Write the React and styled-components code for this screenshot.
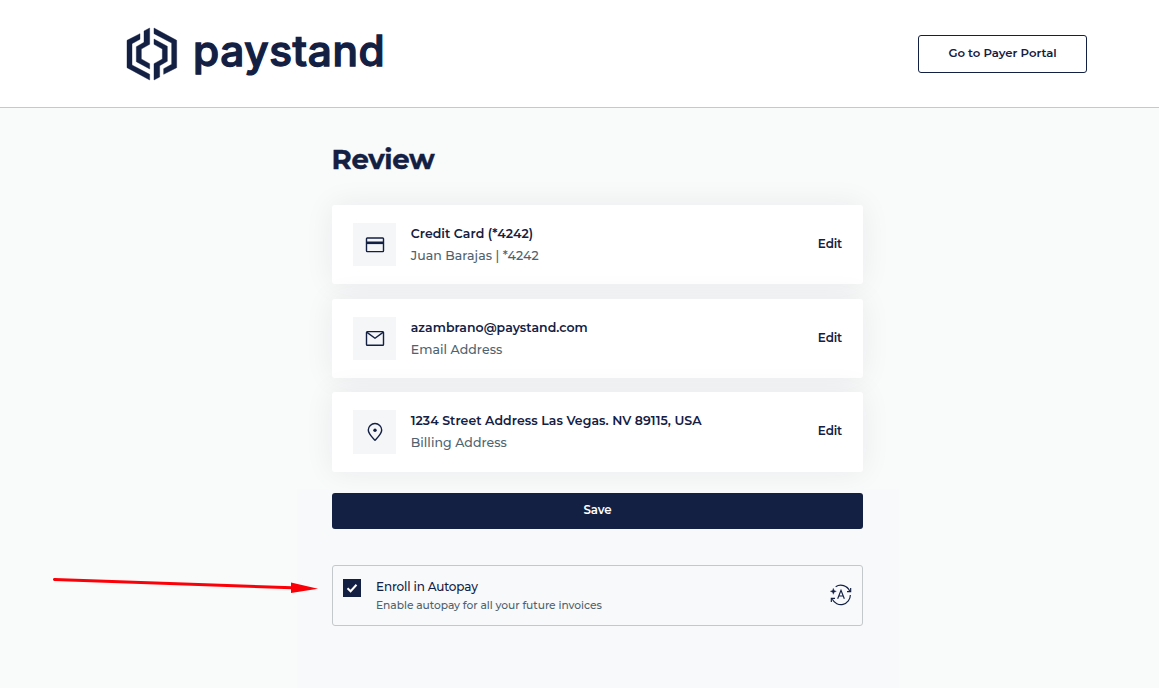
import React from "react";
import styled, { createGlobalStyle } from "styled-components";

const navy = "#132043";
const slate = "#4f626e";
const sans = 'Montserrat, Inter, "Liberation Sans", sans-serif';

const GlobalStyle = createGlobalStyle`
  * { box-sizing: border-box; }
  body {
    margin: 0;
    background: #f9fbfa;
    color: ${navy};
    font-family: ${sans};
  }
`;

const Page = styled.div`
  position: relative;
  display: flex;
  flex-direction: column;
  min-height: 688px;
  overflow: hidden;
`;

const Header = styled.header`
  display: flex;
  align-items: center;
  justify-content: space-between;
  height: 108px;
  padding: 0 72px 0 126px;
  background: #fff;
  border-bottom: 1px solid #c6c9ca;
`;

const PortalButton = styled.button`
  width: 169px;
  height: 38px;
  padding: 0 0 2px;
  border: 1px solid ${navy};
  border-radius: 3px;
  background: #fff;
  color: ${navy};
  font: 600 11.7px ${sans};
  letter-spacing: -0.03px;
`;

const Main = styled.main`
  display: flex;
  flex: 1;
  flex-direction: column;
  width: 602px;
  margin-left: 297px;
`;

const ReviewSection = styled.section`
  display: flex;
  flex-direction: column;
  height: 381px;
  padding: 33px 36px 0 35px;
`;

const Heading = styled.h1`
  height: 36px;
  margin: 0 0 28px -0.5px;
  font-size: 27.5px;
  font-weight: 700;
  line-height: 36px;
  letter-spacing: -0.3px;
  -webkit-text-stroke: 0.4px ${navy};
`;

const CardList = styled.div`
  display: flex;
  flex-direction: column;
  gap: 14.2px;
`;

const Card = styled.article`
  display: flex;
  align-items: center;
  height: 79.4px;
  padding: 0 21px;
  border-radius: 3px;
  background: #fff;
  box-shadow: 0 0 30px rgba(20, 31, 67, 0.07);
`;

const IconTile = styled.div`
  display: flex;
  align-items: center;
  justify-content: center;
  width: 43px;
  height: 43.4px;
  margin-right: 14.7px;
  background: #f4f6f8;
`;

const CardText = styled.div`
  flex: 1;
  padding-top: 0.6px;
  white-space: nowrap;
`;

const CardTitle = styled.div`
  font-size: 12.5px;
  font-weight: 600;
  line-height: 22px;
  letter-spacing: 0.05px;
`;

const CardCaption = styled.div`
  color: ${slate};
  font-size: 12.5px;
  font-weight: 500;
  line-height: 21.6px;
  letter-spacing: 0.07px;
`;

const EditButton = styled.button`
  padding: 0 0 2px;
  border: 0;
  background: none;
  color: ${navy};
  font: 600 12px ${sans};
  letter-spacing: -0.15px;
`;

const ActionSection = styled.section`
  display: flex;
  flex: 1;
  flex-direction: column;
  padding: 4px 36px 0 35px;
  background: #f8f9fb;
`;

const SaveButton = styled.button`
  height: 36px;
  margin-bottom: 36px;
  padding: 0 0 3px;
  border: 0;
  border-radius: 3px;
  background: ${navy};
  color: #fff;
  font: 600 11.8px ${sans};
  letter-spacing: -0.15px;
`;

const Autopay = styled.div`
  display: flex;
  align-items: flex-start;
  height: 61px;
  padding: 13px 10px 0;
  border: 1px solid #c5c8cb;
  border-radius: 3px;
`;

const CheckBox = styled.span`
  display: flex;
  align-items: center;
  justify-content: center;
  width: 18px;
  height: 18px;
  margin-right: 15px;
  background: ${navy};
`;

const AutopayText = styled.div`
  flex: 1;
  margin-top: -1px;
  white-space: nowrap;
`;

const AutopayTitle = styled.div`
  font-size: 12px;
  font-weight: 500;
  line-height: 18px;
  letter-spacing: -0.15px;
`;

const AutopayCaption = styled.div`
  margin-top: 1px;
  color: ${slate};
  font-size: 10.7px;
  font-weight: 500;
  line-height: 18px;
  letter-spacing: -0.04px;
`;

const AutopayIconSlot = styled.div`
  height: 22px;
  margin-top: 5px;
`;

const Pointer = styled.svg`
  position: absolute;
  top: 570px;
  left: 50px;
`;

function LogoHalf(props) {
  return (
    <g {...props}>
      <path d="M90 56 51 76V158L119 195V178L66 150V86L90 73Z" />
      <path d="M119 39 102 48V82L79 95V140L119 162V146L94 132V102L119 88Z" />
    </g>
  );
}

function Logo() {
  return (
    <svg width="260" height="60" viewBox="48 27 780 180" fill={navy} aria-label="paystand">
      <g stroke={navy} strokeWidth="1.2">
        <LogoHalf />
        <LogoHalf transform="rotate(180 125.5 117)" />
      </g>
      <text x="249" y="152" fontSize="127" fontWeight="500" fontFamily="Inter, sans-serif" textLength="575" stroke={navy} strokeWidth="4">
        paystand
      </text>
    </svg>
  );
}

function CardIcon() {
  return (
    <svg width="20" height="20" viewBox="0 0 20 20" fill="none" stroke={navy} strokeWidth="1.4">
      <rect x="1.5" y="3" width="17" height="13.6" rx="0.8" />
      <path d="M1.5 7.8H18.5" strokeWidth="2.6" />
    </svg>
  );
}

function MailIcon() {
  return (
    <svg width="20" height="20" viewBox="0 0 20 20" fill="none" stroke={navy} strokeWidth="1.4" strokeLinejoin="round">
      <rect x="1.5" y="3.6" width="17" height="13.6" rx="0.8" />
      <path d="M2 4.4 10 10.2 18 4.4" />
    </svg>
  );
}

function PinIcon() {
  return (
    <svg width="20" height="20" viewBox="0 0 20 20" fill="none" stroke={navy} strokeWidth="1.4" strokeLinejoin="round">
      <path d="M10 18.3C6.8 14.8 3.3 11.8 3.3 8a6.7 6.5 0 0 1 13.4 0C16.7 11.8 13.2 14.8 10 18.3Z" />
      <circle cx="10" cy="8.3" r="1.7" fill={navy} stroke="none" />
    </svg>
  );
}

function AutopayIcon() {
  return (
    <svg width="22" height="22" viewBox="690 372 66 66" fill="none" stroke={navy} strokeWidth="3.5">
      <path d="M707 380A29 29 0 0 1 749 393" />
      <path d="M752 384V395H741" />
      <path d="M751 405A28.5 28.5 0 0 1 697 418" />
      <path d="M694 426V415H705" />
      <path d="M713 416 723 391 733 416M716.5 408H729.5" />
      <path d="M700 385 702.5 391.5 709 394 702.5 396.5 700 403 697.5 396.5 691 394 697.5 391.5Z" fill={navy} strokeWidth="1" />
    </svg>
  );
}

const items = [
  { Icon: CardIcon, title: "Credit Card (*4242)", caption: "Juan Barajas | *4242" },
  { Icon: MailIcon, title: "azambrano@paystand.com", caption: "Email Address" },
  { Icon: PinIcon, title: "1234 Street Address Las Vegas. NV 89115, USA", caption: "Billing Address" },
];

export default function App() {
  return (
    <Page>
      <GlobalStyle />
      <Header>
        <Logo />
        <PortalButton>Go to Payer Portal</PortalButton>
      </Header>
      <Main>
        <ReviewSection>
          <Heading>Review</Heading>
          <CardList>
            {items.map(({ Icon, title, caption }) => (
              <Card key={title}>
                <IconTile><Icon /></IconTile>
                <CardText>
                  <CardTitle>{title}</CardTitle>
                  <CardCaption>{caption}</CardCaption>
                </CardText>
                <EditButton>Edit</EditButton>
              </Card>
            ))}
          </CardList>
        </ReviewSection>
        <ActionSection>
          <SaveButton>Save</SaveButton>
          <Autopay>
            <CheckBox>
              <svg width="12" height="12" viewBox="0 0 12 12" fill="none" stroke="#fff" strokeWidth="2">
                <path d="M1.5 6.2 4.6 9.2 10.5 2.8" />
              </svg>
            </CheckBox>
            <AutopayText>
              <AutopayTitle>Enroll in Autopay</AutopayTitle>
              <AutopayCaption>Enable autopay for all your future invoices</AutopayCaption>
            </AutopayText>
            <AutopayIconSlot><AutopayIcon /></AutopayIconSlot>
          </Autopay>
        </ActionSection>
      </Main>
      <Pointer width="270" height="30" viewBox="0 0 270 30" fill="#fb0007">
        <path d="M4.5 9.5 242 17.8" stroke="#fb0007" strokeWidth="3" strokeLinecap="round" />
        <path d="M241 12.5V23L268 18.7Z" />
      </Pointer>
    </Page>
  );
}
